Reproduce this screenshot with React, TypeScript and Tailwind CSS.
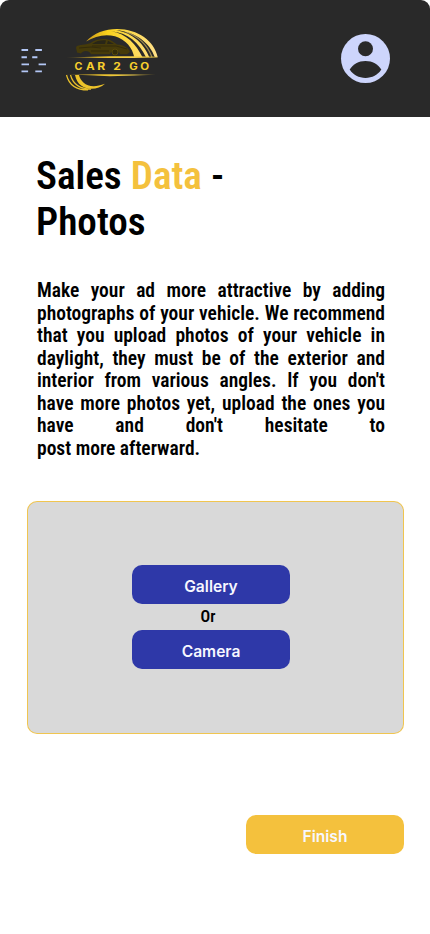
import type { ReactNode } from "react";

const condensed =
  "[font-family:'Roboto_Condensed',Roboto,sans-serif] [font-stretch:75%]";

function MenuIcon() {
  return (
    <svg width="26" height="26" viewBox="21 48 26 26" aria-label="Menu">
      <path
        stroke="#b3c7f5"
        strokeWidth="1.9"
        d="M21.5 50h6.6M35.3 50h6.6M21.5 57.3h5.4M32.2 57.3h5.2M21.5 64.4h7.5M38.6 64.4h7.4M21.5 71.4h6.6M35.3 71.4h6.6"
      />
    </svg>
  );
}

function Logo() {
  return (
    <svg width="96" height="68" viewBox="64 26 96 68" aria-label="Car 2 Go">
      <defs>
        <linearGradient id="arc" x1="0" y1="0" x2="1" y2="0">
          <stop offset="0" stopColor="#c9981a" />
          <stop offset="0.3" stopColor="#fbd31c" />
          <stop offset="1" stopColor="#ffe08a" />
        </linearGradient>
        <linearGradient id="line" gradientUnits="userSpaceOnUse" x1="66" y1="0" x2="157" y2="0">
          <stop offset="0" stopColor="#c9a227" stopOpacity="0.25" />
          <stop offset="0.35" stopColor="#e6be2c" />
          <stop offset="0.75" stopColor="#f3d04a" />
          <stop offset="1" stopColor="#e6be2c" stopOpacity="0.3" />
        </linearGradient>
      </defs>
      <path fill="url(#arc)" d="M86 41.500C94 33 105 29 117 29C138 29 154.500 41 157.700 57.300H134.300C132.500 48 126 39.500 115 36.200C105 33.600 95 36 86 41.500Z" />
      <path fill="#292929" d="M111 31.300C128 32.500 139 43 146 57.300H142.500C136 44 127 34 111 31.300Z" />
      <path fill="#292929" d="M116 30C136 32 150 43 154.800 57.300H149.300C144 44 134 33.500 116 30Z" />
      <path fill="none" stroke="#ffdc70" strokeWidth="1.300" d="M125 31.500C138 36 147.500 45 152 57.300" opacity=".55" />
      <path fill="#463b0a" d="M76 47.500C77 44.500 82 45.500 90 43.300C96 38.500 106 37.700 112 41L117 44.500C124 45 129 48 130 52L127 54.300H120C119 49 112 48.500 110 54.300H91C89 50 83 50 81 53.500L77 52.500Z" />
      <path fill="#292617" d="M92 44C97 40.500 102 40 106 40.500L105 44ZM108 40.700L114 44H107Z" />
      <path fill="none" stroke="#2e270b" strokeWidth=".8" d="M79 48L91 47L101 48M92 46H116L127 49M91 51H109" />
      <circle cx="115" cy="52" r="3" fill="#332c0a" stroke="#57490b" />
      <path fill="url(#line)" d="M66 57.500L110 56.200H157.500V58H110Z" />
      <path fill="url(#line)" d="M66 74.300H110L156 74.800L110 76.200Z" />
      {["C", "A", "R", "2", "G", "O"].map((letter, i) => (
        <text
          key={letter}
          x={[74.6, 86, 97.3, 113.2, 129.3, 140.3][i]}
          y="69.700"
          fill="#f7cf2d"
          fontSize="9.700"
          textLength={[7.9, 8.7, 8, 7.6, 8.5, 8.9][i]}
          lengthAdjust="spacingAndGlyphs"
          className="font-bold [font-family:Inter,sans-serif]"
        >
          {letter}
        </text>
      ))}
      <path fill="#edc32a" d="M75 75H79C81 83 89 90 105 83.800C96 92 78 91 75 75Z" />
      <path fill="none" stroke="#e9c02a" strokeWidth="1.200" d="M70.500 75C73 84 80 89 91 89.200M66.500 75C69 85 77 90 88 90" />
    </svg>
  );
}

function AvatarIcon() {
  return (
    <svg width="50" height="50" viewBox="340 33 50 50" aria-label="Account">
      <circle cx="365.500" cy="58.500" r="24.500" fill="#cdd5fc" />
      <circle cx="365.500" cy="48.700" r="7.500" fill="#292929" />
      <path
        fill="#292929"
        d="M349.700 69.600C353 64 358.500 60.900 365.500 60.900S378 64 381.300 69.600C378 75 372 78 365.500 78S353 75 349.700 69.600Z"
      />
    </svg>
  );
}

function Button({ children, className }: { children: ReactNode; className: string }) {
  return (
    <button
      className={`flex h-[39px] w-[158px] items-center justify-center rounded-[10px] pt-1 text-[15.600px] font-semibold leading-5 text-[#f7f7ff] [font-family:Inter,sans-serif] ${className}`}
    >
      {children}
    </button>
  );
}

const lines = [
  "Make your ad more attractive by adding",
  "photographs of your vehicle. We recommend",
  "that you upload photos of your vehicle in",
  "daylight, they must be of the exterior and",
  "interior from various angles. If you don't",
  "have more photos yet, upload the ones you",
  "have and don't hesitate to",
];

export default function App() {
  return (
    <div className="h-[934px] w-[430px] overflow-hidden bg-white">
      <header className="flex h-[117px] items-start rounded-t-[9px] bg-[#292929] pl-[21px]">
        <div className="pt-12">
          <MenuIcon />
        </div>
        <div className="ml-[17px] pt-[26px]">
          <Logo />
        </div>
        <div className="ml-auto pr-10 pt-[33px]">
          <AvatarIcon />
        </div>
      </header>
      <main>
        <h1 className={`ml-[36px] mt-[36px] text-[39.200px] font-semibold leading-[46px] text-black ${condensed}`}>
          Sales <span className="text-[#f4c13d]">Data</span> -<br />
          Photos
        </h1>
        <p className={`ml-[37px] mt-[35px] w-[348px] text-[19.500px] font-semibold leading-[22.500px] text-black ${condensed}`}>
          {lines.map((line) => (
            <span key={line} className="block whitespace-nowrap text-justify [text-align-last:justify]">
              {line}
            </span>
          ))}
          <span className="block">post more afterward.</span>
        </p>
        <section className="ml-[27px] mt-[41px] h-[233px] w-[377px] rounded-[10px] bg-[#f0c550] p-px">
          <div className="flex h-full flex-col items-center rounded-[9px] bg-[#d9d9d9] pr-[9px] pt-[63px]">
            <Button className="bg-[#2e38a8]">Gallery</Button>
            <span className={`flex h-[26px] items-center pr-[6px] text-[16px] font-semibold text-black ${condensed}`}>Or</span>
            <Button className="bg-[#2e38a8]">Camera</Button>
          </div>
        </section>
        <div className="mt-[81px] flex justify-end pr-[26px]">
          <Button className="bg-[#f4c13d]">Finish</Button>
        </div>
      </main>
    </div>
  );
}
